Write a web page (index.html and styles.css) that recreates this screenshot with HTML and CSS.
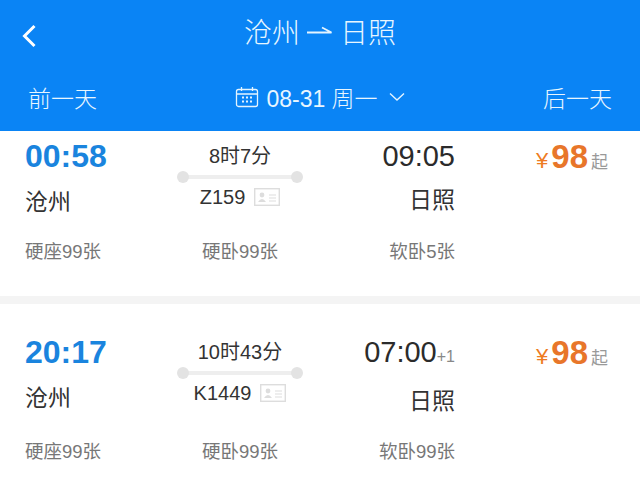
FILE: index.html

```html
<!doctype html>
<html>
<head>
    <title>沧州 - 日照</title>
    <meta charset="utf-8" />
    <link rel="stylesheet" href="styles.css">
</head>
<body>
<div id="header">
	<div class="title-row">
		<svg class="back" width="16" height="26" viewBox="0 0 16 26"><path d="M13.5 3 L3.5 13 L13.5 23" fill="none" stroke="#fff" stroke-width="3"/></svg>
		<span>沧州</span>
		<svg class="arrow" width="26" height="12" viewBox="0 0 26 12"><path d="M0 7.5 H24.5 L15 2.5" fill="none" stroke="#e4f4ff" stroke-width="1.8"/></svg>
		<span>日照</span>
	</div>
	<div class="date-row">
		<span>前一天</span>
		<div class="date">
			<svg width="24" height="22" viewBox="0 0 24 22">
				<g fill="none" stroke="#e4f4ff" stroke-width="1.3">
					<rect x="1.5" y="3.5" width="21" height="17" rx="2"/>
					<path d="M1.5 8 H22.5 M6.5 1 V5 M17.5 1 V5"/>
				</g>
				<g fill="#e4f4ff">
					<rect x="7" y="10.5" width="2" height="2"/><rect x="11" y="10.5" width="2" height="2"/><rect x="15" y="10.5" width="2" height="2"/>
					<rect x="7" y="14.5" width="2" height="2"/><rect x="11" y="14.5" width="2" height="2"/><rect x="15" y="14.5" width="2" height="2"/>
				</g>
			</svg>
			<span>08-31 周一</span>
			<svg class="chevron" width="16" height="10" viewBox="0 0 16 10"><path d="M1 1.5 L8 8 L15 1.5" fill="none" stroke="#e4f4ff" stroke-width="1.4"/></svg>
		</div>
		<span>后一天</span>
	</div>
</div>

<div class="card first">
	<div class="row top">
		<div class="depart">00:58</div>
		<div class="middle">8时7分</div>
		<div class="arrive">09:05</div>
		<div class="price"><i>¥</i><b>98</b><em>起</em></div>
	</div>
	<div class="line"></div>
	<div class="row station">
		<div>沧州</div>
		<div class="train">Z159
			<svg width="26" height="18" viewBox="0 0 26 18"><rect x="0.7" y="0.7" width="24.6" height="16.6" fill="none" stroke="#ddd" stroke-width="1.4"/><circle cx="8" cy="7" r="2.4" fill="#ddd"/><path d="M4 14 Q8 8 12 14 Z" fill="#ddd"/><path d="M15 7 H22 M15 10 H22 M15 13 H22" stroke="#ddd"/></svg>
		</div>
		<div class="arrive-name">日照</div>
	</div>
	<div class="row seats">
		<div>硬座99张</div>
		<div class="center">硬卧99张</div>
		<div class="right">软卧5张</div>
	</div>
</div>

<div class="card second">
	<div class="row top">
		<div class="depart">20:17</div>
		<div class="middle">10时43分</div>
		<div class="arrive">07:00<small>+1</small></div>
		<div class="price"><i>¥</i><b>98</b><em>起</em></div>
	</div>
	<div class="line"></div>
	<div class="row station">
		<div>沧州</div>
		<div class="train">K1449
			<svg width="26" height="18" viewBox="0 0 26 18"><rect x="0.7" y="0.7" width="24.6" height="16.6" fill="none" stroke="#ddd" stroke-width="1.4"/><circle cx="8" cy="7" r="2.4" fill="#ddd"/><path d="M4 14 Q8 8 12 14 Z" fill="#ddd"/><path d="M15 7 H22 M15 10 H22 M15 13 H22" stroke="#ddd"/></svg>
		</div>
		<div class="arrive-name">日照</div>
	</div>
	<div class="row seats">
		<div>硬座99张</div>
		<div class="center">硬卧99张</div>
		<div class="right">软卧99张</div>
	</div>
</div>
</body>
</html>
```

FILE: styles.css

```css
html, body {
	margin: 0;
	height: 490px;
	overflow: hidden;
	background: #fff;
}
body {
	font-family: "Liberation Sans", "Noto Sans CJK SC", sans-serif;
}

#header {
	height: 131px;
	background: #0a84f5;
	color: #e8f6ff;
	box-sizing: border-box;
	padding-top: 13px;
}
.title-row {
	position: relative;
	display: flex;
	justify-content: center;
	align-items: center;
	gap: 7px;
	height: 36px;
	font-size: 28px;
	font-weight: 300;
}
.back {
	position: absolute;
	left: 21px;
	top: 10px;
}
.date-row {
	display: flex;
	justify-content: space-between;
	align-items: center;
	margin-top: 33px;
	height: 30px;
	padding: 0 28px;
	font-size: 23px;
	font-weight: 300;
}
.date {
	display: flex;
	align-items: center;
	gap: 7px;
}
.chevron {
	margin-left: 4px;
}

.card {
	height: 173px;
	box-sizing: border-box;
	border-bottom: 8px solid #f4f4f4;
	padding: 0 32px 0 25px;
}
.card.first {
	padding-top: 7px;
}
.card.second {
	padding-top: 30px;
	border-bottom: none;
}

.row {
	display: grid;
	grid-template-columns: 130px 170px 130px 1fr;
	align-items: center;
}
.top {
	height: 35px;
}
.depart {
	font-size: 32px;
	font-weight: bold;
	color: #1a84de;
	margin-top: -2px;
}
.middle {
	text-align: center;
	font-size: 20px;
	color: #333;
	margin-top: -5px;
}
.arrive {
	font-size: 29px;
	color: #2b2b2b;
	text-align: right;
	white-space: nowrap;
	margin-top: -2px;
}
.arrive small {
	font-size: 16px;
	color: #888;
}
.price {
	display: flex;
	justify-content: flex-end;
	align-items: baseline;
	gap: 3px;
}
.price i {
	font-style: normal;
	font-size: 22px;
	color: #ee7b22;
}
.price b {
	font-size: 33px;
	color: #e8762a;
}
.price em {
	font-style: normal;
	font-size: 17px;
	color: #999;
}

.line {
	position: relative;
	width: 114px;
	height: 4px;
	margin: 2px 0 0 158px;
	background: #eee;
}
.line::before, .line::after {
	content: "";
	position: absolute;
	top: -4px;
	width: 12px;
	height: 12px;
	border-radius: 50%;
	background: #e3e3e3;
}
.line::before { left: -6px; }
.line::after { right: -6px; }

.station {
	height: 42px;
	font-size: 23px;
	color: #333;
}
.train {
	display: flex;
	justify-content: center;
	align-items: center;
	gap: 9px;
	font-size: 20px;
	color: #333;
	margin-top: -6px;
}
.arrive-name {
	text-align: right;
}
.first .arrive-name {
	margin-top: -4px;
}
.second .arrive-name {
	margin-top: 6px;
}

.seats {
	margin-top: 14px;
	font-size: 18.5px;
	color: #777;
	height: 30px;
}
.second .seats {
	margin-top: 18px;
}
.center {
	text-align: center;
}
.right {
	text-align: right;
}
```
